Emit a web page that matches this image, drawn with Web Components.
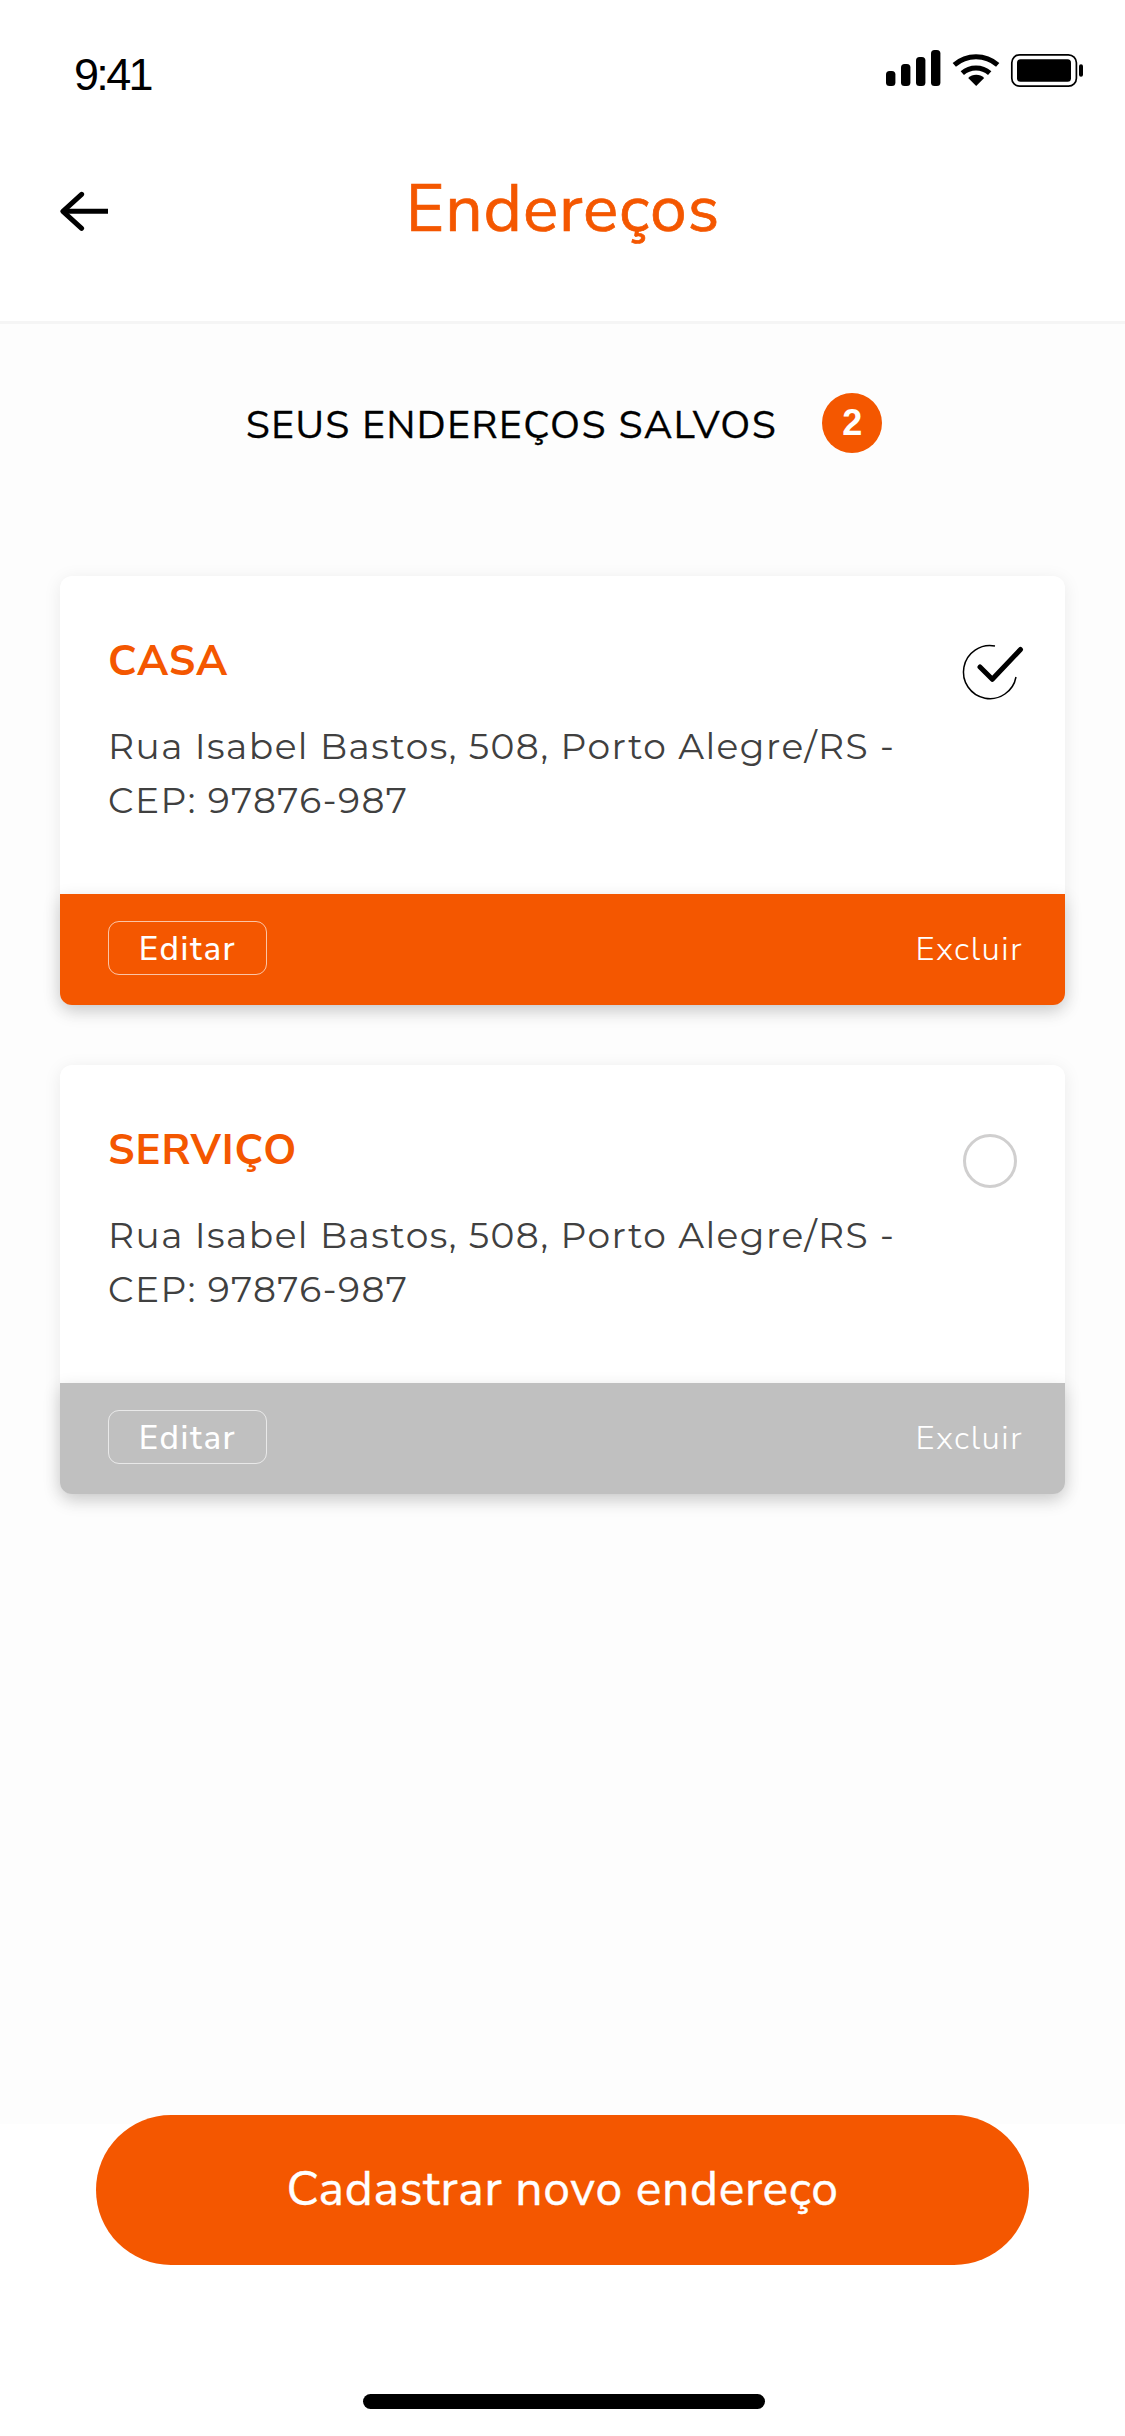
<!DOCTYPE html>
<html lang="pt-BR">
<head>
<meta charset="utf-8">
<title>Endereços</title>
<style>
  body { margin: 0; background: #fff; color: #000; font-family: "Nunito Sans", Lato, sans-serif; --brand: #f45700; }
</style>
</head>
<body>
<address-screen></address-screen>
<script>
const define = (name, html) => customElements.define(name, class extends HTMLElement {
  constructor() {
    super();
    const t = document.createElement('template');
    t.innerHTML = html;
    this.attachShadow({ mode: 'open' }).append(t.content.cloneNode(true));
  }
});

define('status-bar', `
  <style>
    :host { display: flex; justify-content: space-between; height: 132px; box-sizing: border-box; padding: 0 42px 0 74px; }
    time { font: 45px/60px "Liberation Sans", Arial, sans-serif; letter-spacing: -2.7px; margin-top: 45px; }
    svg { display: block; margin-top: 50px; }
  </style>
  <time>9:41</time>
  <svg width="197" height="38" viewBox="886 50 197 38">
    <rect x="886" y="71" width="9.4" height="15" rx="3.5"/>
    <rect x="901" y="64" width="9.4" height="22" rx="3.5"/>
    <rect x="916" y="57" width="9.4" height="29" rx="3.5"/>
    <rect x="931" y="50" width="9.4" height="36" rx="3.5"/>
    <g fill="none" stroke="#000" stroke-width="5">
      <path d="M954.3 64.8 A33 33 0 0 1 997.7 64.8"/>
      <path d="M962.3 73.2 A20.5 20.5 0 0 1 989.7 73.2"/>
    </g>
    <path d="M976.2 86 L968.2 78 A11.5 11.5 0 0 1 984.2 78 Z"/>
    <rect x="1011.8" y="54.8" width="64.6" height="31.4" rx="8" fill="none" stroke="#000" stroke-width="1.7"/>
    <rect x="1017" y="59.3" width="54" height="22.4" rx="3.5"/>
    <rect x="1079" y="64.3" width="4" height="12.4" rx="2"/>
  </svg>`);

define('nav-header', `
  <style>
    :host { display: grid; grid-template-columns: 1fr auto 1fr; height: 192px; box-sizing: border-box; padding: 0 60px; border-bottom: 3px solid #f5f5f5; }
    svg { display: block; margin-top: 59px; }
    h1 { margin: 37px 0 0 1px; font-size: 66px; font-weight: 400; line-height: 80px; letter-spacing: .9px; color: var(--brand); -webkit-text-stroke: .7px var(--brand); }
  </style>
  <svg width="50" height="41" viewBox="0 0 50 41" fill="none" stroke="#000">
    <path d="M3 20.3H48" stroke-width="5"/>
    <path d="M21.6 3.3L2.9 20.3L21.6 37.3" stroke-width="5" stroke-linecap="round" stroke-linejoin="round"/>
  </svg>
  <h1><slot></slot></h1>`);

define('section-title', `
  <style>
    :host { display: flex; justify-content: center; align-items: center; gap: 45px; height: 60px; box-sizing: border-box; padding-left: 3px; }
    h2 { margin: 5px 0 0; font-size: 39px; font-weight: 400; line-height: 54px; letter-spacing: 1.48px; -webkit-text-stroke: .3px #000; }
    .count { display: grid; place-items: center; width: 60px; height: 60px; border-radius: 50%; background: var(--brand); color: #fff; font: bold 36px/60px "Liberation Sans", Arial, sans-serif; }
  </style>
  <h2><slot></slot></h2><span class="count"><slot name="count"></slot></span>`);

define('address-card', `
  <style>
    :host { display: block; height: 429px; border-radius: 12px; background: #fff; box-shadow: 0 3px 18px rgba(0,0,0,.08); --bar: #c0c0c0; }
    :host([selected]) { --bar: var(--brand); }
    .body { display: flex; justify-content: space-between; height: 318px; box-sizing: border-box; padding: 58px 41px 0 48px; }
    h3 { margin: 1px 0 30px; font-size: 42px; font-weight: 700; line-height: 54px; letter-spacing: 1px; color: var(--brand); }
    p { margin: 0; font: 400 36px/54px Montserrat, Inter, sans-serif; letter-spacing: 1.46px; color: #404040; white-space: nowrap; }
    svg { display: block; margin-top: 9px; }
    .on, :host([selected]) .off { display: none; }
    :host([selected]) .on { display: block; }
    .bar { display: flex; justify-content: space-between; align-items: center; height: 111px; box-sizing: border-box; padding: 0 42px 3px 48px; border-radius: 0 0 12px 12px; background: var(--bar); box-shadow: 0 6px 18px rgba(0,0,0,.16); color: #fff; }
    .bar span { font-size: 33px; line-height: 50px; }
    .bar .edit { width: 159px; height: 54px; box-sizing: border-box; border: 1px solid rgba(255,255,255,.65); border-radius: 11px; text-align: center; font-weight: 500; line-height: 56px; letter-spacing: 1.6px; }
    .bar .del { padding-top: 4px; font-weight: 300; letter-spacing: 1.5px; }
  </style>
  <div class="body">
    <div><h3><slot name="name"></slot></h3><p><slot></slot></p></div>
    <svg class="on" width="64" height="58" viewBox="960 643 64 58" fill="none" stroke="#000">
      <path d="M995 646.1A26.5 26.5 0 1 0 1016 677" stroke-width="1.5"/>
      <path d="M980 667L992.3 679.3L1020.5 649.5" stroke-width="5" stroke-linecap="round" stroke-linejoin="round"/>
    </svg>
    <svg class="off" width="64" height="58" viewBox="960 643 64 58" fill="none" stroke="#d0cfcf">
      <circle cx="990" cy="672" r="25.5" stroke-width="3"/>
    </svg>
  </div>
  <div class="bar"><span class="edit">Editar</span><span class="del">Excluir</span></div>`);

define('primary-button', `
  <style>
    :host { display: flex; justify-content: center; align-items: center; width: 933px; height: 150px; border-radius: 75px; background: var(--brand); color: #fff; font-size: 48px; font-weight: 400; line-height: 60px; letter-spacing: .7px; -webkit-text-stroke: .4px #fff; box-sizing: border-box; padding-bottom: 2px; }
  </style>
  <slot></slot>`);

define('address-screen', `
  <style>
    :host { display: flex; flex-direction: column; width: 1125px; height: 2436px; background: #fff; overflow: hidden; }
    main { display: flex; flex-direction: column; height: 1800px; box-sizing: border-box; padding: 69px 60px 0; background: #fdfdfd; }
    .list { display: flex; flex-direction: column; gap: 60px; margin-top: 123px; }
    footer { display: flex; flex-direction: column; align-items: center; margin-top: -9px; }
    .home { width: 402px; height: 15px; margin: 129px 0 0 3px; border-radius: 8px; background: #000; }
  </style>
  <status-bar></status-bar>
  <nav-header>Endereços</nav-header>
  <main>
    <section-title>SEUS ENDEREÇOS SALVOS<span slot="count">2</span></section-title>
    <div class="list">
      <address-card selected><span slot="name">CASA</span>Rua Isabel Bastos, 508, Porto Alegre/RS -<br>CEP: 97876-987</address-card>
      <address-card><span slot="name">SERVIÇO</span>Rua Isabel Bastos, 508, Porto Alegre/RS -<br>CEP: 97876-987</address-card>
    </div>
  </main>
  <footer>
    <primary-button>Cadastrar novo endereço</primary-button>
    <div class="home"></div>
  </footer>`);
</script>
</body>
</html>
